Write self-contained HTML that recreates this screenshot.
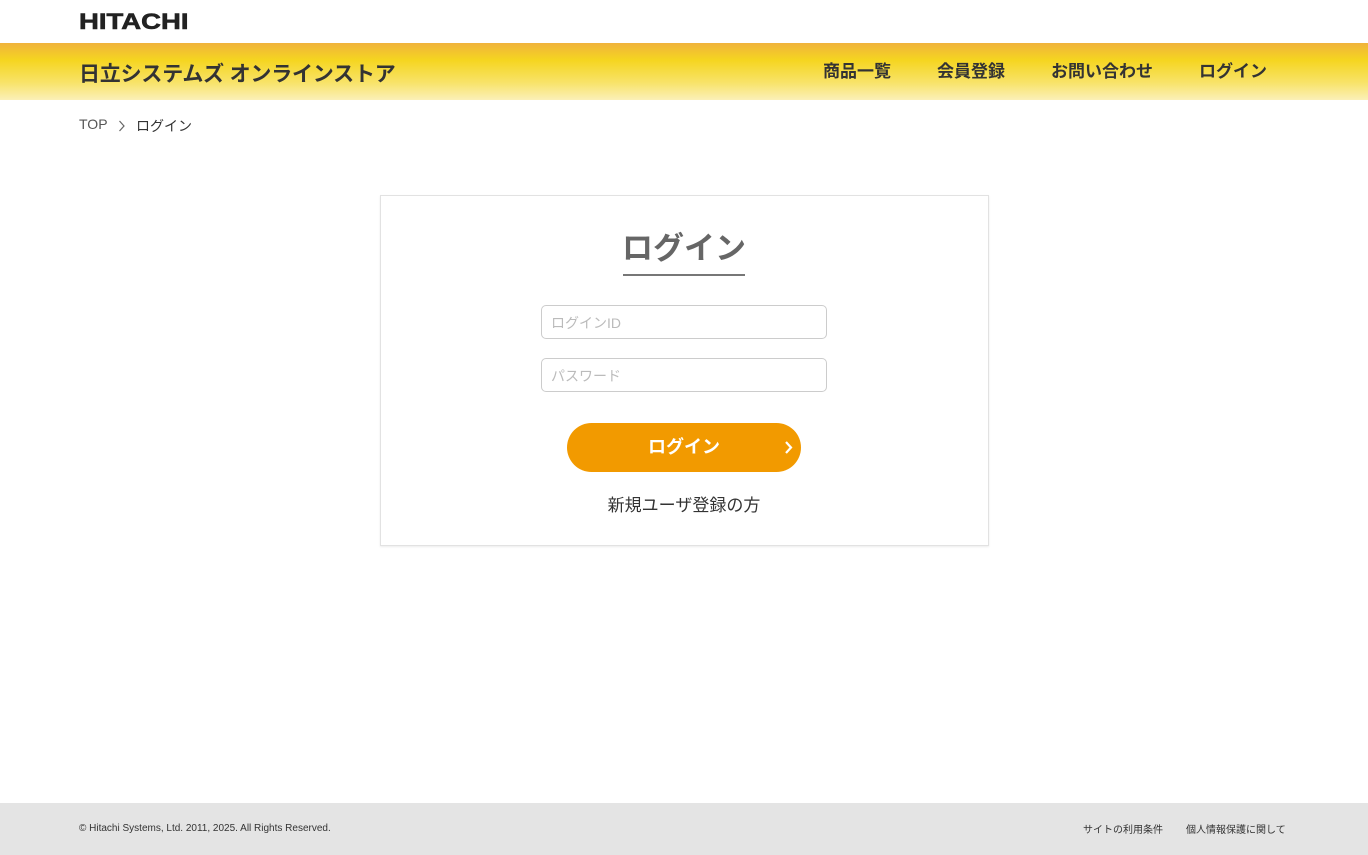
<!DOCTYPE html>
<html><head><meta charset="utf-8"><style>
*{margin:0;padding:0;box-sizing:border-box}
body{width:1368px;height:855px;position:relative;background:#fff;font-family:"Liberation Sans","Noto Sans CJK JP",sans-serif;color:#333;overflow:hidden}
.logo{position:absolute;left:79px;top:9px;font-size:22px;font-weight:bold;color:#222;font-family:"Liberation Sans",sans-serif;transform:scaleX(1.25);transform-origin:left;-webkit-text-stroke:0.6px #222}
.bar{position:absolute;left:0;top:43px;width:1368px;height:57px;background:linear-gradient(#f0b33c 0%,#f5d520 30%,#f8e36a 70%,#fbf0b8 100%)}
.title{position:absolute;left:79px;top:58px;font-size:21px;font-weight:bold;color:#333;letter-spacing:-0.2px;white-space:nowrap}
.nav{position:absolute;top:57px;font-size:17px;font-weight:bold;color:#333;white-space:nowrap}
.bc{position:absolute;top:116px;font-size:14px;color:#555;white-space:nowrap}
.card{position:absolute;left:380px;top:195px;width:609px;height:351px;border:1px solid #e2e2e2;box-shadow:0 1px 2px rgba(0,0,0,.08)}
.h{position:absolute;left:603px;top:223px;width:162px;text-align:center;font-size:31px;font-weight:bold;color:#666;white-space:nowrap}
.ul{position:absolute;left:623px;top:274px;width:122px;height:2px;background:#777}
.in{position:absolute;left:541px;width:286px;height:34px;border:1px solid #ccc;border-radius:5px;font-size:14px;color:#bbb;padding:7px 9px;white-space:nowrap}
.btn{position:absolute;left:567px;top:423px;width:234px;height:49px;border-radius:25px;background:#f29a00;color:#fff;font-weight:bold;font-size:18px;text-align:center;line-height:49px}
.reg{position:absolute;left:540px;width:288px;top:491px;text-align:center;font-size:17px;color:#333}
.foot{position:absolute;left:0;top:803px;width:1368px;height:52px;background:#e4e4e4;font-size:10px;color:#333}
</style></head><body>
<div class="logo">HITACHI</div>
<div class="bar"></div>
<div class="title">日立システムズ オンラインストア</div>
<div class="nav" style="left:823px">商品一覧</div>
<div class="nav" style="left:937px">会員登録</div>
<div class="nav" style="left:1051px">お問い合わせ</div>
<div class="nav" style="left:1199px">ログイン</div>
<div class="bc" style="left:79px">TOP</div>
<svg style="position:absolute;left:118px;top:120px" width="8" height="12" viewBox="0 0 8 12"><path d="M1.5 1l4.5 5-4.5 5" stroke="#666" stroke-width="1.2" fill="none"/></svg>
<div class="bc" style="left:136px;color:#333">ログイン</div>
<div class="card"></div>
<div class="h">ログイン</div>
<div class="ul"></div>
<div class="in" style="top:305px">ログインID</div>
<div class="in" style="top:358px">パスワード</div>
<div class="btn">ログイン<svg style="position:absolute;right:7px;top:17px" width="10" height="15" viewBox="0 0 10 15"><path d="M2 2l5 5.5L2 13" stroke="#fff" stroke-width="2.2" fill="none"/></svg></div>
<div class="reg">新規ユーザ登録の方</div>
<div class="foot"><span style="position:absolute;left:79px;top:20px;font-size:10px">© Hitachi Systems, Ltd. 2011, 2025. All Rights Reserved.</span><span style="position:absolute;left:1083px;top:18px">サイトの利用条件</span><span style="position:absolute;left:1186px;top:18px">個人情報保護に関して</span></div>
</body></html>
